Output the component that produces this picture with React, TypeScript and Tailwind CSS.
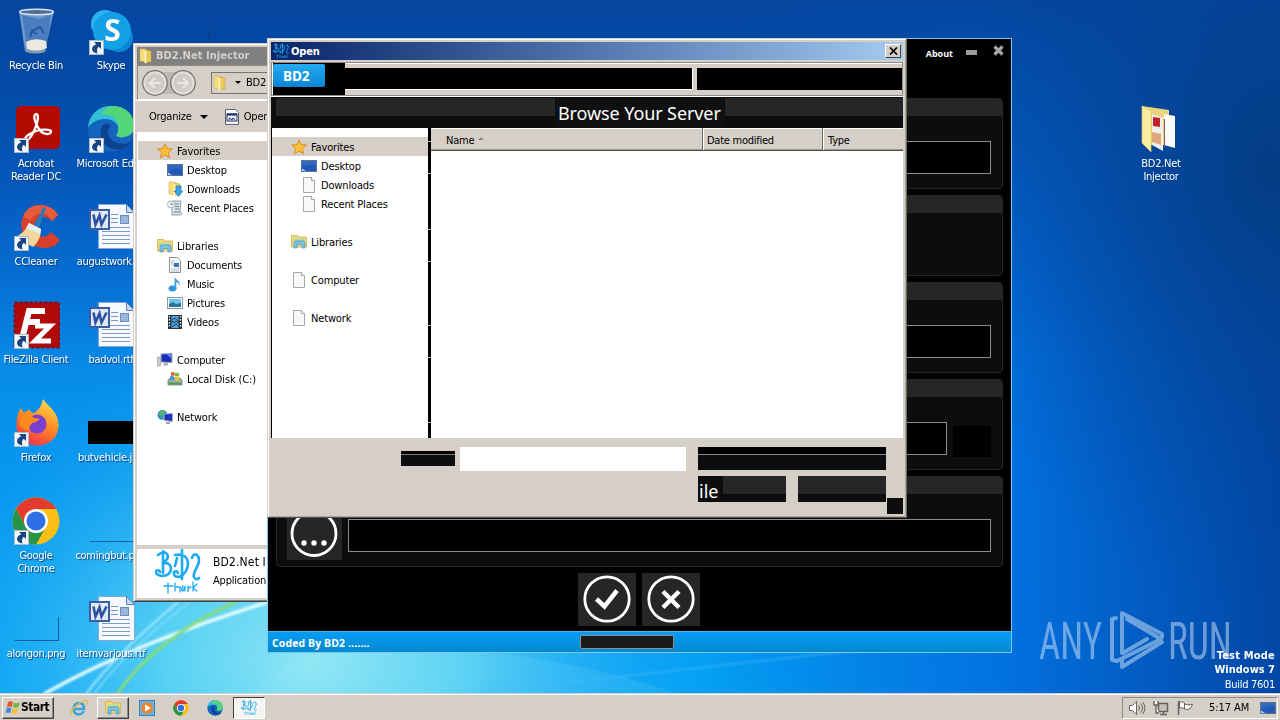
import type { ReactNode } from "react";

type IconName =
  | "star" | "desktop" | "downloads" | "recent" | "libraries" | "documents"
  | "music" | "pictures" | "videos" | "computer" | "disk" | "network" | "file" | "folder";

function SmallIcon({ name }: { name: IconName }) {
  return (
    <svg width="16" height="16" viewBox="0 0 16 16" className="shrink-0">
      {name === "star" && (
        <path d="M8 .8l2 4.8 5.3.4-4 3.5 1.3 5.3L8 12l-4.6 2.8 1.3-5.3-4-3.5L6 5.6z" fill="#fdc23b" stroke="#dc8b22" />
      )}
      {name === "desktop" && (
        <>
          <rect x=".5" y="2.5" width="15" height="11" fill="#1f58b8" stroke="#5d7392" />
          <path d="M1 3h14v4Q7 5 1 10z" fill="#3169c0" />
          <path d="M1 13V10.500l4 2.500z" fill="#a8d5f0" />
        </>
      )}
      {name === "file" && (
        <>
          <path d="M2.500.5h8l3 3v12h-11z" fill="#f8f8f8" stroke="#a8a8a8" />
          <path d="M10.500.5v3h3" fill="#fff" stroke="#a8a8a8" />
        </>
      )}
      {(name === "folder" || name === "downloads") && (
        <>
          <path d="M2 1h6v13l-6-1z" fill="#f5dc7c" stroke="#d9b44a" strokeWidth=".6" />
          <path d="M8 2l5 1v11H8z" fill="#edc75a" stroke="#cba43c" strokeWidth=".6" />
          <path d="M6.500 3v12l2 .6V3z" fill="#fff3b4" />
        </>
      )}
      {name === "downloads" && <path d="M9 5h5v5h2l-4.500 5.500L7 10h2z" fill="#39a2e4" stroke="#1972ad" strokeWidth=".6" />}
      {name === "recent" && (
        <>
          <path d="M5 1h9l-1 10 2 3-2 1H5V5z" fill="#d8e3e8" stroke="#7c8d96" strokeWidth=".8" />
          <path d="M8 4h4M8 6.500h4M8 9h4M7 12h6" stroke="#71838d" />
          <circle cx="4" cy="4.500" r="3.500" fill="#ecf4f8" stroke="#94a9b6" strokeWidth=".8" />
          <path d="M4 2.500v2h2" fill="none" stroke="#5a707c" strokeWidth=".8" />
        </>
      )}
      {name === "libraries" && (
        <>
          <path d="M.5 1.500h6l1 1.500h8v10H.5z" fill="#f4d875" stroke="#cfae4a" strokeWidth=".8" />
          <path d="M2 4.500h12v3H2z" fill="#b9dc95" />
          <path d="M3 14V9q0-2 2-2h7q2 0 2 2v5h-3v-3.500H6V14z" fill="#78c4ec" stroke="#4693c4" strokeWidth=".7" />
        </>
      )}
      {name === "documents" && (
        <>
          <path d="M2.500.5h8l3 3v12h-11z" fill="#fcfcfc" stroke="#8a8f96" />
          <path d="M4 4h4M4 6h3M4 8h3M4 12h8M4 14h8" stroke="#9ba9ba" strokeWidth=".8" />
          <rect x="7" y="6" width="5" height="4" fill="#3d74b4" />
        </>
      )}
      {name === "music" && (
        <>
          <ellipse cx="5.500" cy="12.500" rx="4" ry="3" fill="#2f96dc" />
          <path d="M7.500 12V1c1 3 6 3 5 9-1-3-2-3.500-3.200-4v7z" fill="#3f9fe0" />
        </>
      )}
      {name === "pictures" && (
        <>
          <rect x=".5" y="2.500" width="15" height="11" fill="#fff" stroke="#8195a4" />
          <rect x="2" y="4" width="12" height="8" fill="#6fc3e8" />
          <path d="M2 12V9l4-2 3 2 5-1v4z" fill="#2c7396" />
        </>
      )}
      {name === "videos" && (
        <>
          <rect x="1" y="1" width="14" height="14" fill="#28323c" />
          <path d="M4.500 2h7v5.500h-7zM4.500 8.500h7V14h-7z" fill="#4ca4dc" />
          <path d="M5 6l3-2 3 3M5 13l4-3 2 2" stroke="#173f63" fill="none" />
          <path d="M2.500 2v12M13.500 2v12" stroke="#e8eef2" strokeWidth="1.300" strokeDasharray="1.500 1.500" />
        </>
      )}
      {name === "computer" && (
        <>
          <path d="M.5 5h3v9h-3z" fill="#c9ced2" stroke="#8b9298" strokeWidth=".6" />
          <path d="M4 2l11-.8v9.600L4 10z" fill="#1b2fb8" stroke="#a9b3bd" />
          <path d="M9 2l5.500-.4v5z" fill="#5e86ee" />
          <path d="M7 11h4v2.500H6z" fill="#aab2b8" />
        </>
      )}
      {name === "disk" && (
        <>
          <path d="M1 9l2-2h10l2 2v5H1z" fill="#9fb0a8" stroke="#66776d" strokeWidth=".7" />
          <path d="M1.500 12.500h13" stroke="#4c9d55" strokeWidth="2" />
          <path d="M4 1.500q2-1 3.500 0V5Q6 4 4 5z" fill="#e4572a" />
          <path d="M8 1.500q2 1 4 0V5Q10 6 8 5z" fill="#7cba3c" />
          <path d="M3 5.500q2-1 4 0V9Q5 8 3 9z" fill="#3f8fdc" />
          <path d="M8 5.500q2 1 4 0V9Q10 10 8 9z" fill="#f5c02c" />
        </>
      )}
      {name === "network" && (
        <>
          <circle cx="5.500" cy="6" r="5" fill="#2f8fc4" />
          <path d="M3 2q4-1 5 1L5 7 2 6zM5 8l3 1-2 2z" fill="#58b868" />
          <path d="M7 5l8.500-.5v8L7 11.500z" fill="#1c32bd" stroke="#a9b3bd" />
          <path d="M9 13h4v2H9z" fill="#9ea6ac" />
        </>
      )}
    </svg>
  );
}

function Bd2Logo({ size }: { size: number }) {
  return (
    <svg width={size} height={size} viewBox="0 0 46 46" className="shrink-0">
      <g fill="none" stroke="#1eaaf0" strokeLinecap="round">
        <path d="M3 6q6-5 9-1 3 5-5 9 9-1 9 6-1 7-9 7-7-1-6-5 3-2 4 1M8 2v22" strokeWidth="2.600" />
        <path d="M20 6q12-2 13 8 0 10-9 14-6 0-5-5 3-2 4 1M27 1v29M22 9l-2 8" strokeWidth="2.600" />
        <path d="M37 9q1-5 5-3 4 4 0 12-4 7-3 10 2 4 5 1" strokeWidth="2.600" />
        <path d="M13 34v10M9 37h9M20 34v8M20 38h5v5M28 37q-3 4 0 5l2-5v5M33 37v6q0-5 3-5M38 33v9M38 39l4-4M38 39l4 3" strokeWidth="1.300" />
      </g>
    </svg>
  );
}

function Shortcut() {
  return (
    <svg width="15" height="15" viewBox="0 0 15 15" className="absolute left-[2px] top-[33px]">
      <rect x=".5" y=".5" width="14" height="14" fill="#f2f7fb" stroke="#a9bccb" />
      <path d="M5 2h7v7l-2.200-2.200Q7 9 8.500 13.500 3 12.500 3 9q0-3 4.200-4.800z" fill="#1c4484" />
    </svg>
  );
}

function RecycleArt() {
  return (
    <svg width="48" height="48" viewBox="0 0 48 48">
      <path d="M7 4l6 40q10 4 20 0l9-40z" fill="#b4cbe8" fillOpacity=".6" />
      <path d="M10 8l17 4 12-4-4 30q-10 5-20 0z" fill="#2f69b5" fillOpacity=".55" />
      <path d="M14 35q8-5 20-1l1 7q-10 5-20 1z" fill="#ebe7e1" />
      <path d="M13 42q11 5 21 0l-1 3q-9 3-19 0z" fill="#8a98aa" />
      <path d="M20 24l8-4 4 6M18 30l2-6 5 3" stroke="#2458a2" strokeWidth="2" fill="none" />
      <ellipse cx="24.500" cy="5" rx="17" ry="2.800" fill="#4f6f98" stroke="#d8e2ee" strokeWidth="1.400" />
    </svg>
  );
}

function WordArt() {
  return (
    <svg width="48" height="48" viewBox="0 0 48 48">
      <path d="M11.500 1.500h28l8 8v36h-36z" fill="#f6f9fe" stroke="#8ba5d6" />
      <path d="M39.500 1.500v8h8z" fill="#c8d9f2" stroke="#5e7fbc" />
      <path d="M24 11.500h7M24 15.500h7M24 19.500h7M15 24.500h28M15 28.500h28M15 32.500h28M15 36.500h28M15 40.500h28" stroke="#7c98cc" />
      <rect x="33.500" y="12.500" width="8" height="8" fill="#9bb5da" stroke="#6a8cc4" />
      <rect x="3" y="7" width="19" height="19" fill="#dfe9f8" stroke="#3a5da6" strokeWidth="2" />
      <path d="M6.500 11.500l2 10 4-9 2 9 5-10" fill="none" stroke="#2c519f" strokeWidth="2.600" />
    </svg>
  );
}

function SkypeArt() {
  return (
    <svg width="48" height="48" viewBox="0 0 48 48">
      <circle cx="18" cy="17" r="14" fill="#2bb2ef" />
      <circle cx="32" cy="31" r="14" fill="#0c86d4" />
      <circle cx="25" cy="24" r="19" fill="#14a0e6" />
      <text x="25.500" y="34" textAnchor="middle" fontFamily="Open Sans, sans-serif" fontWeight="700" fontSize="30" fill="#fff" className="[font-stretch:normal]">S</text>
    </svg>
  );
}

function AcrobatArt() {
  return (
    <svg width="48" height="48" viewBox="0 0 48 48">
      <rect x="4" y="1" width="44" height="43" rx="5" fill="#b30b00" />
      <path d="M24 9c-4 1 0 11 3 15 4 6 11 6 12 3s-10-3-15-1-12 6-11 9 6-2 9-9c3-6 6-17 2-17z" fill="none" stroke="#fff" strokeWidth="2.300" />
    </svg>
  );
}

function EdgeArt({ size = 48 }: { size?: number }) {
  return (
    <svg width={size} height={size} viewBox="0 0 48 48">
      <circle cx="24" cy="24" r="23" fill="#1464bd" />
      <path d="M1 23C2 9 13 0 25 1c13 0 22 9 22 20 0 9-8 12-15 11-4-1-2-3-1-5 2-7-4-13-13-13C9 14 2 20 1 23z" fill="#31bfd8" />
      <path d="M26 1c13 0 21 9 21 20 0 9-8 12-15 11-4-1-2-3-1-5C33 18 29 9 14 9c3-5 7-8 12-8z" fill="#55d579" />
      <path d="M17 19c-7 8-3 22 9 25 8 2 15-2 18-7-11 5-23-1-23-10 0-4 3-6 3-6s-4-4-7-2z" fill="#0c4290" />
    </svg>
  );
}

function CCleanerArt() {
  return (
    <svg width="48" height="48" viewBox="0 0 48 48">
      <path d="M46 12C37-2 16-1 11 14c-6 16 6 31 22 31 7 0 12-3 15-8l-9-8c-5 8-17 5-17-5 0-11 13-13 17-6z" fill="#d9402b" />
      <path d="M46 12C37-2 16-1 11 14l8 3c5-9 16-9 21 1z" fill="#ea5a3c" />
      <path d="M31 4l3 1-7 20-5-2z" fill="#2c78ba" />
      <path d="M17 20l12 6q0 11-8 18L3 34q10-4 14-14z" fill="#f3d79f" />
      <path d="M17 20l12 6-1 5-14-6z" fill="#e8edf1" />
    </svg>
  );
}

function FileZillaArt() {
  return (
    <svg width="48" height="48" viewBox="0 0 48 48">
      <rect x="2.500" y="1.500" width="45" height="45" fill="#b20a0a" stroke="#8c0707" strokeWidth="2" strokeDasharray="3 2" />
      <g fill="none" stroke="#fff" strokeWidth="6">
        <path d="M33 10H17L11 34M14 21h14" />
        <path d="M23 25h15L23 40h16" strokeWidth="5" />
      </g>
    </svg>
  );
}

function FirefoxArt() {
  return (
    <svg width="48" height="48" viewBox="0 0 48 48">
      <defs>
        <linearGradient id="fx" x1=".8" y1="0" x2=".3" y2="1">
          <stop offset="0" stopColor="#ffe24a" />
          <stop offset=".5" stopColor="#ff8a24" />
          <stop offset="1" stopColor="#f0304e" />
        </linearGradient>
      </defs>
      <path d="M31 0c4 6 8 8 12 14 7 12 3 25-7 30-12 6-27 1-31-12C3 22 6 13 9 9l3 5q3-3 6-3 1 3 4 3 7-4 9-14z" fill="url(#fx)" />
      <circle cx="25" cy="25" r="9.500" fill="#7a3fd0" />
      <path d="M9 17q8-4 13 2 4 0 6 1-3 3-8 4-4 4-2 8-7-1-11-6z" fill="#ff8a1c" />
    </svg>
  );
}

function ChromeArt({ size = 48 }: { size?: number }) {
  return (
    <svg width={size} height={size} viewBox="0 0 48 48">
      <circle cx="24" cy="24" r="23.500" fill="#fbbf16" />
      <path d="M4 12a23.500 23.500 0 0 1 40.300 0H24L14 30z" fill="#e33b2e" />
      <path d="M4 12a23.500 23.500 0 0 0 20 35.500L34 30H14z" fill="#279447" />
      <circle cx="24" cy="24" r="12" fill="#fff" />
      <circle cx="24" cy="24" r="9.500" fill="#2f6fe6" />
    </svg>
  );
}

function FolderArt() {
  return (
    <svg width="48" height="48" viewBox="0 0 48 48">
      <path d="M5 1l27 4v35H12z" fill="#e9d57c" />
      <path d="M27 9l11 2v32l-11-3z" fill="#fbfbfd" />
      <path d="M15 9l11 4v33l-11-6z" fill="#f1efe9" />
      <path d="M16 12l7 1v9l-7-1z" fill="#c41f2c" />
      <path d="M15 27l9 2v11l-9-3z" fill="#e0a87a" />
      <path d="M27.500 14v28" stroke="#8a5b62" />
      <path d="M5 1l9 5v41L5 38z" fill="#f8eda0" stroke="#dcc65e" strokeWidth=".7" />
    </svg>
  );
}

function DesktopItem({ label, shortcut, children }: { label: string; shortcut?: boolean; children?: ReactNode }) {
  return (
    <div className="flex h-[98px] w-[74px] flex-col items-center">
      <div className="relative h-12 w-12 shrink-0">
        {children}
        {shortcut && <Shortcut />}
      </div>
      <div className="mt-1 whitespace-pre text-center leading-[13px] tracking-[-0.28px] text-white [text-shadow:1px_1px_1px_#0a3a7a]">{label}</div>
    </div>
  );
}

function Wallpaper() {
  return (
    <svg width="1280" height="720" viewBox="0 0 1280 720" className="absolute inset-0">
      <defs>
        <linearGradient id="base" x1="0" y1="0" x2="0" y2="1">
          <stop offset="0" stopColor="#0545a6" />
          <stop offset=".3" stopColor="#066cd4" />
          <stop offset=".55" stopColor="#0790ec" />
          <stop offset="1" stopColor="#04a2f6" />
        </linearGradient>
        <linearGradient id="right" x1="0" y1="0" x2="1" y2="0">
          <stop offset=".55" stopColor="#0362d4" stopOpacity="0" />
          <stop offset=".78" stopColor="#0270e0" stopOpacity=".95" />
          <stop offset="1" stopColor="#0246a4" />
        </linearGradient>
        <linearGradient id="top" x1="0" y1="0" x2="0" y2="1">
          <stop offset="0" stopColor="#0446a0" />
          <stop offset=".12" stopColor="#0448a2" stopOpacity=".75" />
          <stop offset=".5" stopColor="#0450b4" stopOpacity="0" />
        </linearGradient>
        <radialGradient id="dark" gradientUnits="userSpaceOnUse" cx="0" cy="0" r="1" gradientTransform="translate(1270 170) scale(340 440)">
          <stop offset="0" stopColor="#053c80" stopOpacity=".9" />
          <stop offset="1" stopColor="#0446a0" stopOpacity="0" />
        </radialGradient>
        <radialGradient id="glow" gradientUnits="userSpaceOnUse" cx="0" cy="0" r="1" gradientTransform="translate(310 660) scale(420 320)">
          <stop offset="0" stopColor="#8fe6f4" />
          <stop offset=".35" stopColor="#60d6f4" stopOpacity=".9" />
          <stop offset="1" stopColor="#12a4f4" stopOpacity="0" />
        </radialGradient>
        <filter id="soft"><feGaussianBlur stdDeviation="1" /></filter>
      </defs>
      <rect width="1280" height="720" fill="url(#base)" />
      <rect width="1280" height="720" fill="url(#right)" />
      <rect width="1280" height="720" fill="url(#top)" />
      <rect width="1280" height="720" fill="url(#dark)" />
      <rect width="1000" height="720" fill="url(#glow)" />
      <path d="M248 700q30-40 90-52 200-10 380 60z" fill="#b8f4f4" opacity=".1" />
      <g fill="none" filter="url(#soft)">
        <path d="M44 694Q130 645 268 602" stroke="#e2fbff" strokeWidth="3.500" />
        <path d="M86 694Q115 655 178 602" stroke="#a9eaff" strokeWidth="2" />
        <path d="M94 694Q128 648 190 602" stroke="#8de0f9" strokeWidth="1.500" />
        <path d="M117 694Q158 636 236 602" stroke="#86dc78" strokeWidth="3" />
        <path d="M480 692Q700 668 860 650" stroke="#4bbcf8" strokeWidth="2" opacity=".5" />
      </g>
      <path d="M209 28v14" stroke="#0a3b86" />
    </svg>
  );
}

function NavRow({ icon, label, child, active }: { icon: IconName; label: string; child?: boolean; active?: boolean }) {
  return (
    <div className={`flex h-[19px] items-center gap-1 whitespace-nowrap ${child ? "pl-[29px]" : "pl-[19px]"} ${active ? "bg-[#d6cfc8]" : ""}`}>
      <SmallIcon name={icon} />
      <span className="pt-[2px] tracking-[-0.15px]">{label}</span>
    </div>
  );
}

function ExplorerWindow() {
  return (
    <div className="absolute left-[133px] top-[43px] flex h-[559px] w-[420px] flex-col border border-[#d6cfc8] border-b-[#404040] bg-[#d6cfc8] shadow-[inset_1px_1px_0_#fff,inset_0_-1px_0_#808080]">
      <div className="mx-[3px] mt-[3px] flex h-[18px] shrink-0 items-center gap-[2px] bg-[#808080] pl-[1px] text-[11px] font-bold tracking-[0.05px] text-[#d6cfc8]">
        <SmallIcon name="folder" />
        <span className="pb-px">BD2.Net Injector</span>
      </div>
      <div className="mx-[3px] flex h-[35px] shrink-0 items-center border border-[#8d8984] border-b-white border-r-white pl-[3px]">
        <svg width="56" height="28" viewBox="0 0 56 28">
          <path d="M5 3h46v22H5z" fill="#bdb9b4" />
          {[14, 42].map((x) => (
            <g key={x}>
              <circle cx={x} cy="14" r="12.300" fill="#dedbd7" stroke="#77746f" strokeWidth="1.200" />
              <circle cx={x} cy="14" r="10" fill="#cfccc7" stroke="#e6e3e0" />
            </g>
          ))}
          <path d="M20 14H9l5-5M9 14l5 5M36 14h11l-5-5M47 14l-5 5" stroke="#e9e7e4" strokeWidth="2" fill="none" />
        </svg>
        <div className="ml-[14px] flex h-[22px] flex-1 items-center border border-[#77736e]">
          <SmallIcon name="folder" />
          <span className="ml-[7px] mr-[5px] border-x-[3px] border-t-[3px] border-x-transparent border-t-black" />
          <span>BD2</span>
        </div>
      </div>
      <div className="flex h-8 shrink-0 items-center border-t border-white pl-[15px] pr-2">
        <span>Organize</span>
        <span className="ml-[8px] mr-[17px] border-x-4 border-t-4 border-x-transparent border-t-black" />
        <svg width="14" height="16" viewBox="0 0 14 16">
          <path d="M.5.5h10l3 3v12H.5z" fill="#fafafa" stroke="#5b6470" />
          <rect x="2" y="5" width="10" height="7" fill="#e8eef8" stroke="#1b2f62" />
          <path d="M2 5.500h10" stroke="#1b2f62" strokeWidth="2" />
          <path d="M4 11l1-2 2 2 1-2 2 2" stroke="#1b2f62" fill="none" />
        </svg>
        <span className="ml-[5px]">Open</span>
      </div>
      <div className="mx-[3px] h-[413px] shrink-0 bg-white pl-px pt-[9px]">
        <NavRow icon="star" label="Favorites" active />
        <NavRow icon="desktop" label="Desktop" child />
        <NavRow icon="downloads" label="Downloads" child />
        <NavRow icon="recent" label="Recent Places" child />
        <div className="h-[19px]" />
        <NavRow icon="libraries" label="Libraries" />
        <NavRow icon="documents" label="Documents" child />
        <NavRow icon="music" label="Music" child />
        <NavRow icon="pictures" label="Pictures" child />
        <NavRow icon="videos" label="Videos" child />
        <div className="h-[19px]" />
        <NavRow icon="computer" label="Computer" />
        <NavRow icon="disk" label="Local Disk (C:)" child />
        <div className="h-[19px]" />
        <NavRow icon="network" label="Network" />
      </div>
      <div className="mx-[3px] mb-[3px] mt-1 flex flex-1 items-start bg-white pl-[18px]">
        <Bd2Logo size={46} />
        <div className="ml-3 flex flex-col whitespace-nowrap pt-[4px]">
          <span className="h-[18px] text-[12px] leading-[19px] tracking-[0.15px]">BD2.Net Injector</span>
          <span className="h-[19px] leading-[19px]">Application</span>
        </div>
      </div>
    </div>
  );
}

function Group({ height, children }: { height: string; children?: ReactNode }) {
  return (
    <div className={`flex w-[727px] flex-col overflow-hidden rounded-[4px] border border-[#262626] bg-[#0d0d0d] ${height}`}>
      <div className="h-[17px] shrink-0 bg-[#262626]" />
      {children}
    </div>
  );
}

function RoundButton({ children }: { children: ReactNode }) {
  return (
    <div className="flex h-[53px] w-[58px] justify-center bg-[#262626] pt-px">
      <svg width="50" height="50" viewBox="0 0 50 50" fill="none" stroke="#fff">
        <circle cx="25" cy="25" r="22.200" strokeWidth="2.800" />
        {children}
      </svg>
    </div>
  );
}

function InjectorWindow() {
  return (
    <div className="absolute left-[267px] top-[38px] flex h-[615px] w-[745px] flex-col border border-[#7cc8f0] bg-black">
      <div className="flex h-[59px] shrink-0 items-start justify-end pr-[7px] pt-[6px] font-['Open_Sans',sans-serif] text-[9px] font-bold tracking-normal text-white [font-stretch:normal]">
        <span className="mr-[13px] mt-[3px] leading-3">About</span>
        <span className="mr-[16px] mt-[5px] h-[5px] w-[11px] bg-[#9b9b9b]" />
        <svg width="11" height="11" viewBox="0 0 11 11">
          <path d="M1.500 1.500l8 8M9.500 1.500l-8 8" stroke="#a6a6a6" strokeWidth="3.200" />
        </svg>
      </div>
      <div className="flex flex-col gap-[6px] pl-2">
        <Group height="h-[91px]">
          <div className="ml-[71px] mt-[25px] h-[33px] w-[643px] border border-[#8c8c8c] bg-black" />
        </Group>
        <Group height="h-[81px]" />
        <Group height="h-[91px]">
          <div className="ml-[71px] mt-[25px] h-[33px] w-[643px] border border-[#8c8c8c] bg-black" />
        </Group>
        <Group height="h-[91px]">
          <div className="ml-[71px] mt-[25px] flex items-start gap-[6px]">
            <div className="h-[33px] w-[599px] border border-[#8c8c8c] bg-black" />
            <div className="mt-1 h-[31px] w-[38px] bg-black" />
          </div>
        </Group>
        <Group height="h-[91px]">
          <div className="ml-[10px] mt-[13px] flex gap-[6px]">
            <div className="flex h-[53px] w-[55px] items-center justify-center bg-[#262626]">
              <svg width="50" height="50" viewBox="0 0 50 50">
                <circle cx="24" cy="24.500" r="22" fill="none" stroke="#fff" strokeWidth="2.800" />
                <circle cx="14" cy="34" r="2.700" fill="#fff" />
                <circle cx="24" cy="34" r="2.700" fill="#fff" />
                <circle cx="34" cy="34" r="2.700" fill="#fff" />
              </svg>
            </div>
            <div className="mt-3 h-[33px] w-[643px] border border-[#8c8c8c] bg-black" />
          </div>
        </Group>
      </div>
      <div className="mt-[6px] flex shrink-0 gap-[6px] pl-[310px]">
        <RoundButton>
          <path d="M14.500 25l8 7.500L35 16.500" strokeWidth="4.500" />
        </RoundButton>
        <RoundButton>
          <path d="M17 17.500l16 16M33 17.500l-16 16" strokeWidth="4.500" />
        </RoundButton>
      </div>
      <div className="mt-auto flex h-[21px] shrink-0 items-center border-t border-[#4bb2f0] bg-linear-to-b from-[#069cf5] to-[#0389cf] pl-1 font-['Open_Sans',sans-serif] text-[10.500px] font-bold tracking-[0.1px] text-white [font-stretch:normal]">
        <span className="w-[308px] whitespace-nowrap pt-[2px]">Coded By BD2 .......</span>
        <div className="h-[14px] w-[94px] rounded-[2px] border border-[#8e8e8e] bg-[#1b1b1b]" />
      </div>
    </div>
  );
}

function DarkButton({ label }: { label?: string }) {
  return (
    <div className="flex h-[26px] w-[88px] items-start bg-linear-to-b from-[#262626] from-70% to-[#0d0d0d] to-70%">
      {label && <span className="h-[26px] w-[25px] bg-[#0d0d0d] pl-px pt-px font-['Noto_Sans',sans-serif] text-[18px] leading-[28px] tracking-normal text-white [font-stretch:normal]">{label}</span>}
    </div>
  );
}

function OpenDialog() {
  return (
    <div className="absolute left-[267px] top-[38px] flex h-[480px] w-[640px] flex-col border border-[#d6cfc8] border-b-[#55514d] border-r-[#6f6b67] bg-[#d6cfc8] pl-[3px] pr-[2px] pt-[3px] shadow-[inset_1px_1px_0_#fff,inset_-1px_-1px_0_#a9a49e]">
      <div className="mr-px flex h-[18px] shrink-0 items-center gap-[2px] bg-linear-to-r from-[#0a246a] to-[#a6caf0] pl-[2px] pr-[2px] text-[11px] font-bold tracking-[-0.15px] text-white">
        <Bd2Logo size={16} />
        <span className="flex-1">Open</span>
        <div className="flex h-[14px] w-4 items-center justify-center border border-white border-b-[#404040] border-r-[#404040] bg-[#d6cfc8]">
          <svg width="9" height="8" viewBox="0 0 9 8"><path d="M1 .5l7 7M8 .5l-7 7" stroke="#000" strokeWidth="1.700" /></svg>
        </div>
      </div>
      <div className="mr-px mt-[2px] flex h-[34px] shrink-0 border border-[#8d8984] shadow-[inset_1px_1px_0_#fff,0_1px_0_#fff]">
        <div className="ml-px h-8 w-[72px] shrink-0 bg-black pt-px">
          <div className="h-[23px] w-[52px] rounded-[2px] bg-linear-to-b from-[#25aaf2] to-[#0886d6] pl-[10px] font-['Open_Sans',sans-serif] text-[13.500px] font-bold leading-[24px] tracking-[-0.1px] text-white [font-stretch:normal]">BD2</div>
        </div>
        <div className="mt-[5px] h-[22px] w-[348px] shrink-0 border-b border-r border-white bg-black" />
        <div className="ml-1 mt-[5px] h-[22px] flex-1 bg-black" />
      </div>
      <div className="mr-px mt-px flex h-[31px] shrink-0 items-start bg-[#0d0d0d] pl-[5px] pt-px">
        <div className="h-[18px] w-[279px] rounded-tl-[4px] bg-[#262626]" />
        <div className="h-[29px] w-[170px] whitespace-nowrap bg-[#101010] pl-[3px] font-['Noto_Sans',sans-serif] text-[18px] leading-[30px] tracking-[-0.1px] text-white [font-stretch:normal]">Browse Your Server</div>
        <div className="h-[18px] flex-1 bg-[#262626]" />
      </div>
      <div className="mr-[1px] flex h-[310px] shrink-0 border-l border-black bg-black">
        <div className="w-[156px] bg-white pt-[9px]">
          <NavRow icon="star" label="Favorites" active />
          <NavRow icon="desktop" label="Desktop" child />
          <NavRow icon="file" label="Downloads" child />
          <NavRow icon="file" label="Recent Places" child />
          <div className="h-[19px]" />
          <NavRow icon="libraries" label="Libraries" />
          <div className="h-[19px]" />
          <NavRow icon="file" label="Computer" />
          <div className="h-[19px]" />
          <NavRow icon="file" label="Network" />
        </div>
        <div className="flex w-[3px] flex-col pt-[13px]">
          <div className="h-[33px] border-y border-[#aaa]" />
          <div className="mt-[55px] h-[33px] border-y border-[#aaa]" />
          <div className="mt-[63px] h-[33px] border-y border-[#aaa]" />
          <div className="mt-[64px] border-t border-[#aaa]" />
        </div>
        <div className="flex-1 bg-white">
          <div className="flex h-[23px] items-center border-b border-[#55514d] bg-[#d6cfc8] shadow-[inset_0_1px_0_#fff,inset_0_-1px_0_#9a958f]">
            <div className="flex h-full w-[272px] items-center border-r border-[#6f6b67] pl-[15px] pt-[2px]">
              Name
              <span className="mb-1 ml-[4px] border-x-[3px] border-b-[3px] border-x-transparent border-b-[#8d8984]" />
            </div>
            <div className="flex h-full w-[120px] items-center border-l border-r border-l-white border-r-[#6f6b67] pl-[3px] pt-[2px] tracking-[-0.25px]">Date modified</div>
            <div className="flex h-full flex-1 items-center border-l border-white pl-[4px] pt-[2px]">Type</div>
          </div>
        </div>
      </div>
      <div className="flex pl-[130px] pt-[9px]">
        <div className="mt-1 h-[15px] w-[54px] bg-[#0d0d0d]">
          <div className="h-[4px] border-b border-[#777] bg-black" />
        </div>
        <div className="ml-[5px] h-6 w-[226px] bg-white" />
        <div className="ml-3 flex flex-col gap-[6px]">
          <div className="h-[23px] w-[188px] bg-[#0d0d0d]">
            <div className="h-2 border-b border-[#8c8c8c] bg-black" />
          </div>
          <div className="flex gap-3">
            <DarkButton label="ile" />
            <DarkButton />
          </div>
        </div>
        <div className="ml-px mt-[51px] h-4 w-4 bg-[#0d0d0d]" />
      </div>
    </div>
  );
}

function Watermark() {
  return (
    <svg width="204" height="64" viewBox="0 0 204 64" className="absolute left-[1038px] top-[609px] opacity-50">
      <g fill="#d5e6fa" fontFamily="Roboto, sans-serif" fontSize="52" fontWeight="400" letterSpacing="0">
        <text x="1" y="50" textLength="63" lengthAdjust="spacingAndGlyphs">ANY</text>
        <text x="130" y="50" textLength="64" lengthAdjust="spacingAndGlyphs">RUN</text>
      </g>
      <g fill="none" stroke="#d5e6fa" strokeWidth="4" strokeLinejoin="round" strokeLinecap="round">
        <path d="M84 44V4l40 21v3M78 9l-4 1v41l5 1 44-22-34-20" />
        <path d="M84 52v6l40-25M85 44l24-14" />
      </g>
    </svg>
  );
}

function TaskbarApps() {
  return (
    <div className="flex items-center">
      <div className="flex h-[22px] w-[52px] items-center border border-white border-b-[#404040] border-r-[#404040] pl-[2px] text-[12px] font-bold tracking-[-0.5px] shadow-[inset_-1px_-1px_0_#8d8984]">
        <svg width="16" height="16" viewBox="0 0 16 16" className="shrink-0">
          <path d="M3 2q2.500-1.500 5 0L6.800 7Q4.500 5.800 2 7z" fill="#e8562b" />
          <path d="M9 2.500q2.500 1.500 6 0L13.500 7q-3 1.500-5.500 0z" fill="#76b83c" />
          <path d="M1.700 8q2.500-1.200 4.800 0l-1.200 5Q3 11.800.5 13z" fill="#3f8ad8" />
          <path d="M7.700 8.500q2.500 1.500 5.500 0L12 13q-3 1.500-5.500 0z" fill="#f6bf2a" />
        </svg>
        Start
      </div>
      <svg width="18" height="18" viewBox="0 0 18 18" className="ml-4">
        <path d="M14 12q-2 3.500-5.500 3.500-5-.5-5-6 .5-5.500 5.500-5.500t5 6H5" fill="none" stroke="#38a4dc" strokeWidth="2.500" />
        <path d="M1 16Q0 12 7 6q8-6 10-4 1 1-1 4" fill="none" stroke="#e7b83a" strokeWidth="1.300" />
      </svg>
      <div className="ml-[9px] flex h-[22px] w-8 items-center justify-center border border-white border-b-[#404040] border-r-[#404040] shadow-[inset_-1px_-1px_0_#8d8984]">
        <SmallIcon name="libraries" />
      </div>
      <svg width="16" height="16" viewBox="0 0 16 16" className="ml-[10px]">
        <rect x=".5" y=".5" width="15" height="15" fill="#69b4e4" stroke="#3d7fae" />
        <circle cx="8" cy="8" r="5.800" fill="#ef8420" />
        <path d="M6 4.500v7L12 8z" fill="#fff" />
      </svg>
      <div className="ml-[18px]"><ChromeArt size={16} /></div>
      <div className="ml-[18px]"><EdgeArt size={16} /></div>
      <div className="ml-[10px] flex h-[22px] w-[32px] items-center justify-center border border-[#404040] border-b-white border-r-white bg-[#f6f4f2]">
        <Bd2Logo size={16} />
      </div>
    </div>
  );
}

function Tray() {
  return (
    <div className="flex h-[22px] w-[156px] items-center border border-[#8d8984] border-b-white border-r-white pl-[6px]">
      <svg width="64" height="16" viewBox="0 0 64 16" fill="#fff" stroke="#66625e">
        <path d="M.5 5.500h3l4-4v13l-4-4h-3z" />
        <path d="M9.500 5.500q2 2.500 0 5M11.500 3.500q4 4.500 0 9M13.500 2q5 6 0 12" fill="none" />
        <path d="M29.500 3.500h9v8h-9zM31 14.500h7M34.500 12v2" fill="#c3c1bf" strokeWidth="1.500" />
        <path d="M25 1v4h4V1M27 5v8h3" strokeWidth="1.400" />
        <path d="M49.500 1v14" strokeWidth="1.500" />
        <path d="M50.500 2q3-1 5 1v6q-2-2-5-1zM55.500 4q4 2 8 0-1 3-3 5-3 1-5 0z" />
      </svg>
      <span className="ml-4 w-[48px] whitespace-nowrap tracking-[-0.05px]">5:17 AM</span>
      <span className="ml-[3px]"><SmallIcon name="desktop" /></span>
    </div>
  );
}

export default function App() {
  return (
    <div className="relative flex h-[720px] w-[1280px] flex-col overflow-hidden bg-[#0668d2] font-['DejaVu_Sans_Condensed','DejaVu_Sans',sans-serif] text-[11px] leading-[13px] tracking-[-0.2px] text-black [font-stretch:condensed]">
      <Wallpaper />
      <div className="relative flex flex-1 justify-between pt-[7px]">
        <div className="-ml-px flex gap-px">
          <div className="flex flex-col">
            <DesktopItem label="Recycle Bin"><RecycleArt /></DesktopItem>
            <DesktopItem label={"Acrobat\nReader DC"} shortcut><AcrobatArt /></DesktopItem>
            <DesktopItem label="CCleaner" shortcut><CCleanerArt /></DesktopItem>
            <DesktopItem label="FileZilla Client" shortcut><FileZillaArt /></DesktopItem>
            <DesktopItem label="Firefox" shortcut><FirefoxArt /></DesktopItem>
            <DesktopItem label={"Google\nChrome"} shortcut><ChromeArt /></DesktopItem>
            <DesktopItem label="alongon.png"><div className="ml-[3px] mt-[22px] h-[24px] w-11 border-b border-r border-[#0b5fa8]" /></DesktopItem>
          </div>
          <div className="flex flex-col">
            <DesktopItem label="Skype" shortcut><SkypeArt /></DesktopItem>
            <DesktopItem label="Microsoft Edge" shortcut><EdgeArt /></DesktopItem>
            <DesktopItem label="augustwork.rtf"><WordArt /></DesktopItem>
            <DesktopItem label="badvol.rtf"><WordArt /></DesktopItem>
            <DesktopItem label="butvehicle.jpg"><div className="ml-px mt-[22px] h-[23px] w-12 bg-black" /></DesktopItem>
            <DesktopItem label="comingbut.png"><div className="ml-[3px] h-[45px] w-11 border-b border-[#0b5fa8]" /></DesktopItem>
            <DesktopItem label="itemvarious.rtf"><WordArt /></DesktopItem>
          </div>
        </div>
        <div className="mr-[82px] pt-[98px]">
          <DesktopItem label={"BD2.Net\nInjector"}><FolderArt /></DesktopItem>
        </div>
        <Watermark />
        <div className="absolute right-[5px] top-[648px] flex flex-col items-end text-white">
          <span className="h-[14px] text-[11px] font-bold leading-[15px] tracking-[0.2px]">Test Mode</span>
          <span className="h-[15px] text-[11px] font-bold leading-[15px] tracking-normal">Windows 7</span>
          <span className="h-[16px] leading-[16px] tracking-[-0.3px]">Build 7601</span>
        </div>
        <ExplorerWindow />
        <InjectorWindow />
        <OpenDialog />
      </div>
      <div className="relative flex h-7 shrink-0 items-center justify-between border-t border-[#d6cfc8] bg-[#d6cfc8] pl-[2px] pr-[2px] shadow-[inset_0_1px_0_#fff]">
        <TaskbarApps />
        <Tray />
      </div>
    </div>
  );
}
